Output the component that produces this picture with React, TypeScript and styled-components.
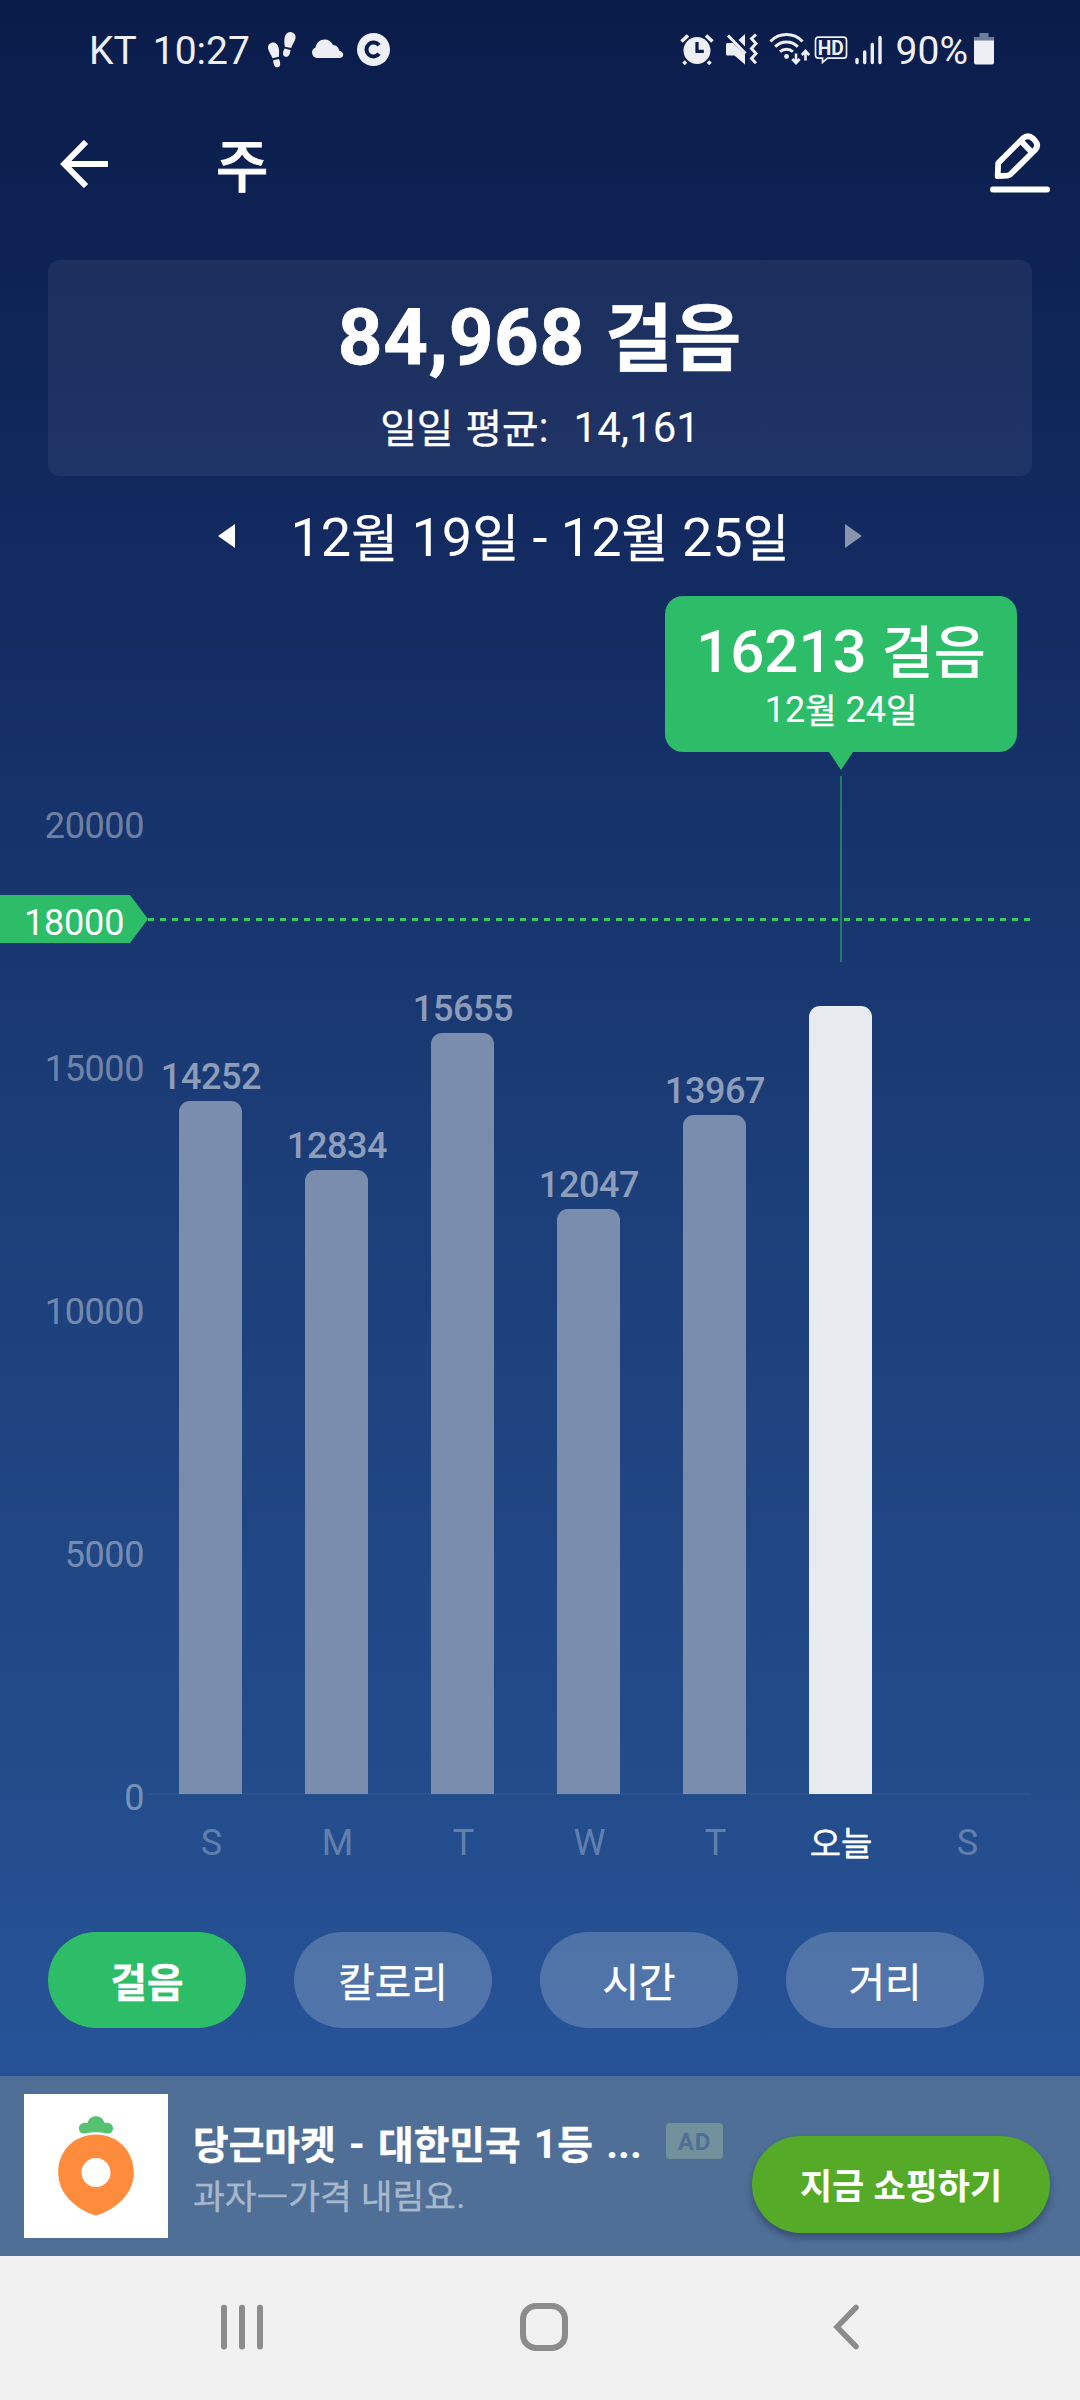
import React from "react";
import styled, { createGlobalStyle } from "styled-components";

const GlobalStyle = createGlobalStyle`
  *, *::before, *::after { box-sizing: border-box; }
  html, body { margin: 0; padding: 0; }
  body {
    width: 1080px;
    font-family: Roboto, "Noto Sans CJK KR", sans-serif;
    color: #fff;
  }
  button {
    margin: 0;
    padding: 0;
    border: 0;
    background: none;
    color: inherit;
    font: inherit;
  }
  svg { display: block; flex: none; }
`;

const AXIS_WIDTH = 148;
const PX_PER_STEP = 0.0486;
const MAX_STEPS = 20000;
const GOAL = 18000;

const Screen = styled.div`
  width: 1080px;
  height: 2400px;
  display: flex;
  flex-direction: column;
  overflow: hidden;
`;

const Page = styled.main`
  height: 2076px;
  flex: none;
  display: flex;
  flex-direction: column;
  background: linear-gradient(180deg, #0a1c4a 0%, #132c62 29%, #1c3e79 57%, #234b89 84%, #265398 100%);
`;

/* Hangul set slightly smaller and sturdier than the Latin text beside it. */
const Ko = styled.span`
  font-size: 0.945em;
  line-height: 0;
  vertical-align: -0.02em;
  -webkit-text-stroke: 0.4px currentColor;
`;

const StatusBar = styled.header`
  height: 100px;
  flex: none;
  display: flex;
  justify-content: space-between;
  padding: 0 86px 0 89px;
  color: #eeeff5;
  font-size: 39px;
  line-height: 103px;
`;

const StatusGroup = styled.div`
  display: flex;
  align-items: flex-start;
`;

const StatusText = styled.span<{ $gap?: number }>`
  margin-right: ${(p) => p.$gap ?? 0}px;
`;

const StatusIcon = styled.svg<{ $top: number; $gap?: number }>`
  margin-top: ${(p) => p.$top}px;
  margin-right: ${(p) => p.$gap ?? 0}px;
`;

const TitleBar = styled.div`
  height: 160px;
  flex: none;
  display: flex;
  align-items: flex-start;
  padding: 32px 30px 0 60px;
`;

const BackButton = styled.button`
  margin-top: 8px;
`;

const Title = styled.h1`
  flex: 1;
  margin: 0 0 0 108px;
  font-size: 57px;
  font-weight: 500;
  line-height: 72px;
  -webkit-text-stroke: 0.8px #fff;
`;

const SummaryCard = styled.section`
  height: 216px;
  flex: none;
  margin: 0 48px;
  padding-top: 33px;
  border-radius: 12px;
  background: rgba(255, 255, 255, 0.06);
  text-align: center;
`;

const Total = styled.div`
  font-size: 78px;
  font-weight: 700;
  letter-spacing: 0.7px;
  line-height: 90px;
  -webkit-text-stroke: 0.8px #fff;
`;

const Average = styled.div`
  margin-top: 15px;
  font-size: 42px;
  line-height: 60px;
  word-spacing: 2px;
  white-space: pre;
`;

const RangeRow = styled.div`
  height: 120px;
  flex: none;
  display: flex;
  align-items: center;
  justify-content: center;
`;

const RangeText = styled.div`
  width: 610px;
  padding-top: 4px;
  text-align: center;
  font-size: 54px;
  line-height: 66px;
`;

const Chart = styled.section`
  position: relative;
  height: 1290px;
  flex: none;
  display: flex;
  padding-top: 226px;
`;

const Axis = styled.div`
  width: ${AXIS_WIDTH}px;
  height: 1014px;
  flex: none;
  display: flex;
  flex-direction: column;
  justify-content: space-between;
  margin-top: -17px;
  padding-right: 4px;
  text-align: right;
  font-size: 36px;
  letter-spacing: -0.4px;
  line-height: 42px;
  color: rgba(255, 255, 255, 0.4);
`;

const Plot = styled.div`
  width: 882px;
  display: flex;
  flex-direction: column;
`;

const Bars = styled.div`
  height: 973px;
  flex: none;
  display: flex;
  border-bottom: 2px solid rgba(255, 255, 255, 0.035);
`;

const BarColumn = styled.div`
  width: 126px;
  height: 972px;
  display: flex;
  flex-direction: column;
  align-items: center;
  justify-content: flex-end;
`;

const BarValue = styled.div`
  margin-bottom: 3px;
  font-size: 36px;
  font-weight: 500;
  letter-spacing: -0.4px;
  line-height: 42px;
  color: rgba(255, 255, 255, 0.5);
`;

const Bar = styled.div<{ $current?: boolean }>`
  width: 63px;
  margin-right: 1px;
  border-radius: 11px 11px 0 0;
  background: ${(p) => (p.$current ? "#e7eaef" : "#7b8dad")};
`;

const Days = styled.div`
  display: flex;
  padding-top: 27px;
`;

const Day = styled.div<{ $current?: boolean }>`
  width: 126px;
  padding-left: ${(p) => (p.$current ? 0 : 1)}px;
  text-align: center;
  font-size: 36px;
  line-height: 42px;
  color: ${(p) => (p.$current ? "#fff" : "rgba(255, 255, 255, 0.3)")};
`;

const GoalMarker = styled.div`
  position: absolute;
  left: 0;
  display: flex;
  align-items: center;
  height: 48px;
`;

const GoalTag = styled.div`
  width: ${AXIS_WIDTH}px;
  height: 48px;
  padding: 7px 0 0 24px;
  font-size: 36px;
  letter-spacing: -0.2px;
  line-height: 42px;
  background: #2dbc67;
  clip-path: polygon(0 0, 130px 0, 100% 50%, 130px 100%, 0 100%);
`;

const GoalLine = styled.div`
  width: 882px;
  height: 3px;
  background: repeating-linear-gradient(90deg, #35ce5e 0 6px, transparent 6px 12px);
`;

const Tooltip = styled.div`
  position: absolute;
  left: 665px;
  top: 0;
  width: 352px;
  display: flex;
  flex-direction: column;
  align-items: center;
`;

const TooltipBody = styled.div`
  width: 100%;
  height: 156px;
  padding-top: 20px;
  border-radius: 18px;
  background: #2dbc67;
  text-align: center;
`;

const TooltipValue = styled.div`
  font-size: 60px;
  font-weight: 500;
  line-height: 72px;
  white-space: nowrap;

  ${Ko} {
    -webkit-text-stroke: 0;
  }
`;

const TooltipDate = styled.div`
  margin-top: 1px;
  font-size: 36px;
  line-height: 42px;
`;

const TooltipArrow = styled.div`
  width: 24px;
  height: 18px;
  background: #2dbc67;
  clip-path: polygon(0 0, 100% 0, 50% 100%);
`;

const TooltipStem = styled.div`
  width: 2px;
  height: 186px;
  margin-top: 6px;
  background: #257b66;
`;

const Tabs = styled.nav`
  display: flex;
  gap: 48px;
  padding: 46px 48px 0;
`;

const Tab = styled.button<{ $active?: boolean }>`
  width: 198px;
  height: 96px;
  padding-top: 3px;
  border-radius: 48px;
  text-align: center;
  font-size: 42px;
  font-weight: ${(p) => (p.$active ? 700 : 400)};
  line-height: 92px;
  background: ${(p) => (p.$active ? "#2dbc67" : "rgba(255, 255, 255, 0.2)")};
`;

const AdBanner = styled.aside`
  height: 180px;
  flex: none;
  display: flex;
  padding: 18px 30px 0 24px;
  background: #4f6f96;
`;

const AdCopy = styled.div`
  width: 584px;
  padding: 26px 0 0 25px;
`;

const AdHeading = styled.div`
  display: flex;
  align-items: center;
  height: 48px;
`;

const AdTitle = styled.div`
  width: 473px;
  font-size: 41px;
  font-weight: 700;
  line-height: 48px;
  word-spacing: 3px;
  white-space: nowrap;
`;

const AdBadge = styled.div`
  width: 57px;
  height: 36px;
  margin-top: -6px;
  border-radius: 4px;
  background: #73919c;
  color: #4f6f96;
  text-align: center;
  font-size: 24px;
  font-weight: 700;
  letter-spacing: 1px;
  line-height: 38px;
`;

const AdText = styled.div`
  margin-top: 4px;
  font-size: 36.5px;
  line-height: 48px;
  color: #a7b7cd;
  white-space: nowrap;
`;

const AdAction = styled.button`
  width: 298px;
  height: 97px;
  margin-top: 42px;
  padding-top: 3px;
  border-radius: 49px;
  background: #55ab27;
  box-shadow: 0 5px 7px rgba(20, 30, 60, 0.38);
  font-size: 37px;
  font-weight: 700;
  line-height: 94px;

  ${Ko} {
    -webkit-text-stroke: 0;
  }
`;

const NavBar = styled.footer`
  height: 144px;
  flex: none;
  display: flex;
  align-items: center;
  gap: 256px;
  padding: 0 0 2px 220px;
  background: #f1f1f1;
`;

const BackKey = styled.div`
  margin-left: 9px;
`;

const FootstepsIcon = () => (
  <StatusIcon $top={31} $gap={13} width="30" height="38" viewBox="0 0 30 38" fill="currentColor">
    <path d="M4 12c4-1.500 7 1.500 7.800 5.500.6 3 .2 5.500.1 8.200l-6.400 1.500C4.500 24 1.200 20.500 1 17c-.1-2.500 1-4.300 3-5z" />
    <path d="M6.200 29.300l5.800-1.400c1 2.300 1.500 4.500 1 6.300-.6 2.300-3.700 3-5.200 1-1.200-1.600-1.500-3.700-1.600-5.900z" />
    <path d="M24.500 1.200c-4-.9-6.500 2.500-7 6.300-.4 3-.1 5.300.3 8.300l6.400 1.300c.8-3.300 3.900-6.600 4.400-10.100.4-3-1.200-5.200-4.100-5.800z" />
    <path d="M17.600 17.500l5.900 1.400c-.2 2.500-.8 4.800-2.200 6.100-1.700 1.600-4.700.8-5.200-1.600-.4-2 .4-4 1.500-5.900z" />
  </StatusIcon>
);

const CloudIcon = () => (
  <StatusIcon $top={38} $gap={13} width="34" height="21" viewBox="0 0 34 21" fill="currentColor">
    <path d="M6.500 20A5.500 5.500 0 0 1 5.500 9.500C6.500 4.500 10 1.500 14.500 1.500c4 0 7 2 8.500 5.600 3.300.2 5.800 2.500 6.200 5.600 2.400.5 4 2 4 4 0 2-1.600 3.300-3.900 3.300z" />
  </StatusIcon>
);

const CircledCIcon = () => (
  <StatusIcon $top={33} width="34" height="34" viewBox="0 0 34 34">
    <circle cx="16.500" cy="16.500" r="16.500" fill="currentColor" />
    <path d="M22 12.200a7 7 0 1 0 0 8.600" fill="none" stroke="#0a1c4a" strokeWidth="4" />
  </StatusIcon>
);

const AlarmIcon = () => (
  <StatusIcon $top={34} $gap={11} width="34" height="31" viewBox="0 0 34 31">
    <circle cx="17" cy="16.500" r="13.500" fill="currentColor" />
    <path d="M1.500 7.500L8 1.500M26 1.500l6.500 6M6 27.500l-2.500 2.500M28 27.500l2.500 2.500" stroke="currentColor" strokeWidth="3.600" />
    <path d="M17 8v9.300h6.800" fill="none" stroke="#0a1c4a" strokeWidth="3.200" />
  </StatusIcon>
);

const MuteVibrateIcon = () => (
  <StatusIcon $top={33} $gap={11} width="33" height="32" viewBox="0 0 33 32">
    <path d="M1 11.500q0-1.500 1.500-1.500H8L20 21.500v10L9.500 22.500H2.500Q1 22.500 1 21z" fill="currentColor" />
    <path d="M13.500 7L20 1v12.500z" fill="currentColor" />
    <path d="M3 2.500l17.500 18" stroke="currentColor" strokeWidth="3" />
    <path d="M31 1.500l-4.500 4 4.500 5-4.500 5 4.500 5-4.500 5 4.500 4.800" fill="none" stroke="currentColor" strokeWidth="3" />
  </StatusIcon>
);

const WifiIcon = () => (
  <StatusIcon $top={33} $gap={4} width="41" height="32" viewBox="0 0 41 32" fill="none" stroke="currentColor">
    <path d="M1.500 8.500a22 22 0 0 1 32 0M6.200 13.800a15.700 15.700 0 0 1 22.600 0M11 18.800a9.300 9.300 0 0 1 13 0" strokeWidth="3" />
    <circle cx="17.500" cy="23.500" r="2.400" fill="currentColor" stroke="none" />
    <path d="M27 20.500v9M23.300 26l3.700 4 3.700-4M36.500 27.500v-9M32.800 22l3.700-4 3.700 4" strokeWidth="2.600" />
  </StatusIcon>
);

const HdText = styled.text`
  font-family: Roboto, sans-serif;
  font-size: 21px;
  font-weight: 700;
`;

const HdIcon = () => (
  <StatusIcon $top={36} $gap={7} width="34" height="28" viewBox="0 0 34 28">
    <path d="M4.500 1.200h25q3 0 3 3v15q0 3-3 3h-16l-5 4.300v-4.300h-4q-3 0-3-3v-15q0-3 3-3z" fill="none" stroke="currentColor" strokeWidth="1.700" />
    <HdText x="16.800" y="19" textAnchor="middle" textLength="26" lengthAdjust="spacingAndGlyphs" fill="currentColor">HD</HdText>
  </StatusIcon>
);

const SignalIcon = () => (
  <StatusIcon $top={35} $gap={14} width="27" height="30" viewBox="0 0 27 30" stroke="currentColor" strokeWidth="3.400" strokeLinecap="round">
    <path d="M2 24.500v3M9.700 17v10.500M17.300 9.500v18M25 2.500v25" />
  </StatusIcon>
);

const BatteryIcon = () => (
  <StatusIcon $top={33} width="20" height="32" viewBox="0 0 20 32" fill="currentColor">
    <path d="M5.500 0h9v4H20v4H0V4h5.500z" opacity=".45" />
    <path d="M0 7.500h20V29.500q0 2-2 2H2q-2 0-2-2z" />
  </StatusIcon>
);

const ArrowLeftIcon = () => (
  <svg width="48" height="48" viewBox="0 0 48 48" fill="none" stroke="#fff" strokeWidth="6">
    <path d="M26 2L4.300 24 26 46M4.500 24H48" />
  </svg>
);

const EditIcon = () => (
  <svg width="60" height="62" viewBox="0 0 60 62" fill="none" stroke="#fff" strokeWidth="5.800" strokeLinejoin="round">
    <path d="M7.700 44.200L8.200 31 33 6.300q5-4.300 10 .2l1.500 1.500q5 5 .5 10L20.500 42.300q-1.200 1.200-3 1.300z" />
    <path d="M31 9l10.500 11" />
    <path d="M3 57.500h54" strokeWidth="6" strokeLinecap="round" />
  </svg>
);

const Triangle = ({ right = false }: { right?: boolean }) => (
  <svg width="17" height="24" viewBox="0 0 17 24" fill="#fff" opacity={right ? 0.5 : 1}>
    <path d={right ? "M0 0l17 12L0 24z" : "M17 0L0 12l17 12z"} />
  </svg>
);

const CarrotLogo = () => (
  <svg width="144" height="144" viewBox="0 0 144 144">
    <path fill="#fff" d="M0 0h144v144H0z" />
    <path fill="#ff8b3d" fillRule="evenodd" d="M72 40.500c21.500 0 37.800 16.500 37.800 38 0 21-17 36.500-37.800 43-20.800-6.500-37.800-22-37.800-43 0-21.500 16.300-38 37.800-38zM72 64a14.500 14.500 0 1 0 0 29 14.500 14.500 0 0 0 0-29z" />
    <path fill="#56c271" d="M61 39.500c-4 .6-6-2-6-5.200 0-3.800 3.500-6.500 8.500-5.300 1-4.200 4.200-6.800 8.500-6.800s7.500 2.600 8.500 6.800c5-1.200 8.500 1.500 8.500 5.300 0 3.200-2 5.800-6 5.200q-11-2.500-22 0z" />
  </svg>
);

const RecentsIcon = () => (
  <svg width="44" height="48" viewBox="0 0 44 48" stroke="#8c8c8c" strokeWidth="6" strokeLinecap="round">
    <path d="M4 4.800v38.600M22 4.800v38.600M40 4.800v38.600" />
  </svg>
);

const HomeIcon = () => (
  <svg width="48" height="48" viewBox="0 0 48 48" fill="none" stroke="#8c8c8c" strokeWidth="6">
    <rect x="3" y="3" width="42" height="42" rx="13" />
  </svg>
);

const BackIcon = () => (
  <svg width="26" height="48" viewBox="0 0 26 48" fill="none" stroke="#8c8c8c" strokeWidth="5.500" strokeLinecap="round">
    <path d="M23 4.500L4 24l19 19.500" />
  </svg>
);

const days = [
  { label: "S", steps: 14252 },
  { label: "M", steps: 12834 },
  { label: "T", steps: 15655 },
  { label: "W", steps: 12047 },
  { label: "T", steps: 13967 },
  { label: "오늘", steps: 16213, current: true },
  { label: "S", steps: 0 },
];

const ticks = [20000, 15000, 10000, 5000, 0];
const tabs = ["걸음", "칼로리", "시간", "거리"];

/* Wraps each Hangul run of a mixed string in its own span. */
const Mixed = ({ text }: { text: string }) => (
  <>
    {text.split(/([가-힣ㅡ]+)/).map((part, i) =>
      i % 2 === 1 ? <Ko key={i}>{part}</Ko> : part
    )}
  </>
);

export default function App() {
  const goalTop = 226 + (MAX_STEPS - GOAL) * PX_PER_STEP - 24;

  return (
    <Screen>
      <GlobalStyle />
      <Page>
        <StatusBar>
          <StatusGroup>
            <StatusText $gap={16}>KT</StatusText>
            <StatusText $gap={17}>10:27</StatusText>
            <FootstepsIcon />
            <CloudIcon />
            <CircledCIcon />
          </StatusGroup>
          <StatusGroup>
            <AlarmIcon />
            <MuteVibrateIcon />
            <WifiIcon />
            <HdIcon />
            <SignalIcon />
            <StatusText $gap={6}>90%</StatusText>
            <BatteryIcon />
          </StatusGroup>
        </StatusBar>

        <TitleBar>
          <BackButton aria-label="뒤로">
            <ArrowLeftIcon />
          </BackButton>
          <Title>주</Title>
          <button aria-label="편집">
            <EditIcon />
          </button>
        </TitleBar>

        <SummaryCard>
          <Total>
            <Mixed text="84,968 걸음" />
          </Total>
          <Average>
            <Mixed text="일일 평균:  14,161" />
          </Average>
        </SummaryCard>

        <RangeRow>
          <Triangle />
          <RangeText>
            <Mixed text="12월 19일 - 12월 25일" />
          </RangeText>
          <Triangle right />
        </RangeRow>

        <Chart>
          <Axis>
            {ticks.map((tick) => (
              <div key={tick}>{tick}</div>
            ))}
          </Axis>
          <Plot>
            <Bars>
              {days.map((day, i) => (
                <BarColumn key={i}>
                  {day.steps > 0 && !day.current && <BarValue>{day.steps}</BarValue>}
                  <Bar $current={day.current} style={{ height: day.steps * PX_PER_STEP }} />
                </BarColumn>
              ))}
            </Bars>
            <Days>
              {days.map((day, i) => (
                <Day key={i} $current={day.current}>
                  <Mixed text={day.label} />
                </Day>
              ))}
            </Days>
          </Plot>
          <GoalMarker style={{ top: Math.round(goalTop) }}>
            <GoalTag>{GOAL}</GoalTag>
            <GoalLine />
          </GoalMarker>
          <Tooltip>
            <TooltipBody>
              <TooltipValue>
                <Mixed text="16213 걸음" />
              </TooltipValue>
              <TooltipDate>
                <Mixed text="12월 24일" />
              </TooltipDate>
            </TooltipBody>
            <TooltipArrow />
            <TooltipStem />
          </Tooltip>
        </Chart>

        <Tabs>
          {tabs.map((tab, i) => (
            <Tab key={tab} $active={i === 0}>
              <Mixed text={tab} />
            </Tab>
          ))}
        </Tabs>
      </Page>

      <AdBanner>
        <CarrotLogo />
        <AdCopy>
          <AdHeading>
            <AdTitle>
              <Mixed text="당근마켓 - 대한민국 1등 ..." />
            </AdTitle>
            <AdBadge>AD</AdBadge>
          </AdHeading>
          <AdText>
            <Mixed text="과자ㅡ가격 내림요." />
          </AdText>
        </AdCopy>
        <AdAction>
          <Mixed text="지금 쇼핑하기" />
        </AdAction>
      </AdBanner>

      <NavBar>
        <RecentsIcon />
        <HomeIcon />
        <BackKey>
          <BackIcon />
        </BackKey>
      </NavBar>
    </Screen>
  );
}
